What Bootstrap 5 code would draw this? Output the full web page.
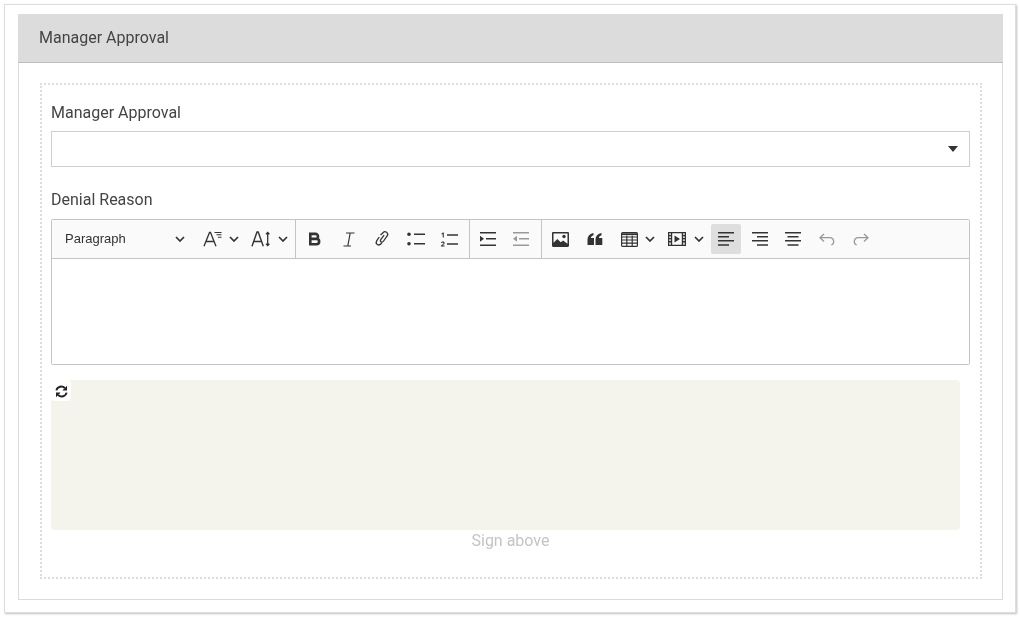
<!DOCTYPE html>
<html lang="en">
<head>
<meta charset="utf-8">
<title>Manager Approval</title>
<link href="https://cdn.jsdelivr.net/npm/bootstrap@5.3.0/dist/css/bootstrap.min.css" rel="stylesheet">
<style>
html,body{height:100%;background:#fff;overflow:hidden}
body{font-family:Roboto,"Liberation Sans",sans-serif;font-size:16px;color:#444;padding:4px 4px 4px 4px}
.sheet{height:609px;border:1px solid #ddd;box-shadow:1px 1px 2px rgba(0,0,0,.25);padding:9px 12px 13px 13px;will-change:transform}
.panel{height:586px;border:1px solid #dcdce0;border-top:0;border-radius:0;background:#fff}
.panel-head{height:49px;background:#dcdcdc;border-bottom:1px solid #bdbdbd;border-radius:0!important;margin:0 -1px;padding:0 21px;color:#444}
.dotbox{margin:20px 20px 0 21px;height:496px;border:2px dotted #ddd;padding:10px 10px 0 9px}
.fld-label{height:36px;padding-top:6px;line-height:24px;margin:0;color:#444;display:block}
.plain-select{height:36px;border:1px solid #ccd0d2;border-radius:0;background:#fff;display:block;width:100%;appearance:none}
.select-wrap{position:relative}
.select-wrap::after{content:"";position:absolute;right:12px;top:15px;border:5px solid transparent;border-top:6px solid #333;border-bottom:0}
.gap-label{margin-top:14px;height:38px;padding-top:7px;line-height:24px;color:#444}
.editor{height:146px;border:1px solid #c4c4c4;border-radius:2px}
.tb{height:39px;background:#fafafa;border-bottom:1px solid #c4c4c4}
.tb-group{height:38px}
.tb-group+.tb-group{border-left:1px solid #c4c4c4}
.tb-btn{height:30px;color:#333;flex:none}
.tb-btn svg{display:block;flex:none}
.w33{width:33.5px}
.para{width:142px;padding-left:13px;padding-right:9px;font-family:"Liberation Sans",sans-serif;font-size:13px;color:#333}
.font-a{width:49px;padding-right:4px;gap:6px}
.font-s{width:52px;padding-left:8px;gap:7px}
.w36{width:36px;padding-left:1px}
.numbered{width:36.5px;padding-left:7px}
.indent-on{width:33.5px;margin-left:1.25px}
.indent-off{width:33px;margin-right:3px}
.w38{width:38px}.w30{width:30px}
.tbl{width:53px;margin-left:2px;padding-left:9px;gap:7px}
.vid{width:46px;padding-left:3px;gap:8px}
.on{background:#dedede;border-radius:2px;width:30px;margin:0 3px 0 0}
.w33b{width:33px}.w34{width:34px}
.edit-area{height:105px;background:#fff}
.sig-wrap{margin-top:15px;position:relative}
.sig-pad{height:150px;width:909px;background:#f4f4ec;border-radius:4px}
.sig-reset{position:absolute;left:0;top:0;width:20px;height:21px;background:#fff;border-radius:4px;padding-top:1px}
.sig-note{text-align:center;color:#c4c4c4;line-height:22px}
</style>
</head>
<body>
<div class="sheet">
  <div class="card panel">
    <div class="card-header panel-head d-flex align-items-center">Manager Approval</div>
    <div class="dotbox">
      <label class="fld-label" for="mgr">Manager Approval</label>
      <div class="select-wrap"><select id="mgr" class="plain-select"></select></div>
      <div class="gap-label">Denial Reason</div>
      <div class="editor">
        <div class="tb d-flex align-items-center">
          <div class="tb-group d-flex align-items-center">
            <div class="tb-btn para d-flex align-items-center justify-content-between">Paragraph
              <svg width="10" height="6" viewBox="0 0 10 6" fill="none" stroke="#333" stroke-width="1.7"><path d="M1 1l4 4 4-4"/></svg>
            </div>
            <div class="tb-btn font-a d-flex align-items-center justify-content-end">
              <svg width="20" height="18" viewBox="0 0 20 18" fill="none" stroke="#333" stroke-width="1.3"><path d="M1 16.300L6.500 2.500h1L13 16.300M3 11.500h8.500"/><path d="M11.500 2.500h7M13.500 4.800h5M15 7.200h3.500" stroke-width="1.100"/></svg>
              <svg width="10" height="6" viewBox="0 0 10 6" fill="none" stroke="#333" stroke-width="1.7"><path d="M1 1l4 4 4-4"/></svg>
            </div>
            <div class="tb-btn font-s d-flex align-items-center">
              <svg width="20" height="18" viewBox="0 0 20 18" fill="none" stroke="#333" stroke-width="1.4"><path d="M1 16.300L6 2h1.200L12.300 16.300M2.800 11.500h8"/><path d="M16.700 2.500v13M15 4.300l1.700-1.800 1.700 1.800M15 13.700l1.700 1.800 1.700-1.800" stroke-width="1.300"/></svg>
              <svg width="10" height="6" viewBox="0 0 10 6" fill="none" stroke="#333" stroke-width="1.7"><path d="M1 1l4 4 4-4"/></svg>
            </div>
          </div>
          <div class="tb-group d-flex align-items-center">
            <div class="tb-btn w36 d-flex align-items-center justify-content-center">
              <svg width="14" height="14" viewBox="0 0 14 14" fill="none" stroke="#333" stroke-width="2.600"><path d="M2.300 .6v12.800M1 1.900h6.500a2.500 2.500 0 0 1 0 5H2.300M2.300 6.900h6.200a2.600 2.600 0 0 1 0 5.300H1"/></svg>
            </div>
            <div class="tb-btn w33 d-flex align-items-center justify-content-center">
              <svg width="12" height="15" viewBox="0 0 12 15" fill="none" stroke="#333" stroke-width="1.200"><path d="M3 1h8.500M.5 14H8M7.200 1L4.800 14"/></svg>
            </div>
            <div class="tb-btn w33 d-flex align-items-center justify-content-center">
              <svg width="16" height="16" viewBox="0 0 16 16" fill="none" stroke="#333" stroke-width="1.300"><path d="M6.500 4L9 1.800a2.600 2.600 0 0 1 4.300 2.900L9.600 10c-1 1.400-2.600 1.400-3.100.3-.3-.7 0-1.300.4-1.900l3.200-4.200"/><path d="M5.300 6L2.800 9.600c-1.700 2.600.7 5.500 3.400 3.800.7-.5 1.200-1 1.700-1.600"/></svg>
            </div>
            <div class="tb-btn w33 d-flex align-items-center justify-content-center">
              <svg width="18" height="14" viewBox="0 0 18 14" fill="#333"><circle cx="2" cy="2.300" r="1.800"/><circle cx="2" cy="11.700" r="1.800"/><path d="M7 1.600h11v1.400H7zM7 11h11v1.400H7z"/></svg>
            </div>
            <div class="tb-btn numbered d-flex align-items-center">
              <svg width="18" height="15" viewBox="0 0 18 15" fill="#333"><path d="M7 2.300h11v1.400H7zM7 11.300h11v1.400H7z"/><path d="M1.600 1.400L3 .6h.8v5H2.700V1.900l-1.100.5zM.9 14.600v-.9l2-1.800c.5-.5.6-.7.6-1s-.3-.5-.7-.5-.8.2-.8.7h-1c0-1 .8-1.600 1.800-1.600s1.800.6 1.800 1.400c0 .7-.4 1.100-1 1.700l-1.100 1h2.100v1z"/></svg>
            </div>
          </div>
          <div class="tb-group d-flex align-items-center">
            <div class="tb-btn indent-on d-flex align-items-center justify-content-center">
              <svg width="16" height="14" viewBox="0 0 16 14" fill="#333"><path d="M0 0h16v1.500H0zM0 12.500h16V14H0zM6 6h10v1.500H6zM0 3.800l4 3-4 3z"/></svg>
            </div>
            <div class="tb-btn indent-off d-flex align-items-center justify-content-center">
              <svg width="16" height="14" viewBox="0 0 16 14" fill="#999"><path d="M0 0h16v1.500H0zM0 12.500h16V14H0zM6 6h10v1.500H6zM4 3.800l-4 3 4 3z"/></svg>
            </div>
          </div>
          <div class="tb-group d-flex align-items-center">
            <div class="tb-btn w38 d-flex align-items-center justify-content-center">
              <svg width="17" height="15" viewBox="0 0 17 15"><path fill-rule="evenodd" fill="#333" d="M0 1.200C0 .5.500 0 1.200 0h14.600c.7 0 1.200.5 1.200 1.200v12.600c0 .7-.5 1.200-1.200 1.200H1.200C.5 15 0 14.500 0 13.800zM1.500 1.500v9.300l3.800-3.800 3.500 3.300 2.300-1.800 4.400 3.200V1.500z"/><circle cx="12" cy="4.500" r="1.700" fill="#333"/></svg>
            </div>
            <div class="tb-btn w30 d-flex align-items-center justify-content-center">
              <svg width="16" height="12" viewBox="0 0 15 12" fill="#333"><path d="M0 7a6.500 6.500 0 0 1 6-7v2.300C4.500 2.700 3.600 3.600 3.400 5H6.500v7H0zM8 7a6.500 6.500 0 0 1 6-7v2.300c-1.500.4-2.400 1.300-2.600 2.700H14.800v7H8z"/></svg>
            </div>
            <div class="tb-btn tbl d-flex align-items-center">
              <svg width="17" height="15" viewBox="0 0 17 15" fill="none" stroke="#333" stroke-width="1.200"><rect x=".6" y=".6" width="15.800" height="13.800" rx="1"/><path d="M.6 5h15.800M.6 8h15.800M.6 11.200h15.800M5.800 3.500v10.900M11.200 3.500v10.900"/><path d="M.6 2.200h15.800" stroke-width="1.800"/></svg>
              <svg width="10" height="6" viewBox="0 0 10 6" fill="none" stroke="#333" stroke-width="1.700"><path d="M1 1l4 4 4-4"/></svg>
            </div>
            <div class="tb-btn vid d-flex align-items-center">
              <svg width="18" height="14" viewBox="0 0 18 14"><path fill-rule="evenodd" fill="#333" d="M0 0h18v14H0zM1.300 1.300v1.600h1.500V1.300zM1.300 4.300v1.600h1.500V4.300zM1.300 7.300v1.600h1.500V7.300zM1.300 10.400V12.700h1.500v-2.300zM15.200 1.300v1.600h1.500V1.300zM15.200 4.300v1.600h1.500V4.300zM15.200 7.300v1.600h1.500V7.300zM15.200 10.400v2.300h1.500v-2.300zM4.200 1.300v11.400h9.600V1.300z"/><path fill="#333" d="M6.500 3.500l5.500 3.500-5.500 3.500z"/></svg>
              <svg width="10" height="6" viewBox="0 0 10 6" fill="none" stroke="#333" stroke-width="1.700"><path d="M1 1l4 4 4-4"/></svg>
            </div>
            <div class="tb-btn on d-flex align-items-center justify-content-center">
              <svg width="16" height="14" viewBox="0 0 16 14" fill="#333"><path d="M0 0h16v1.400H0zM0 4h11v1.400H0zM0 8h16v1.400H0zM0 12.300h11v1.400H0z"/></svg>
            </div>
            <div class="tb-btn w33b d-flex align-items-center justify-content-center">
              <svg width="16" height="14" viewBox="0 0 16 14" fill="#333"><path d="M0 0h16v1.400H0zM5 4h11v1.400H5zM0 8h16v1.400H0zM5 12.300h11v1.400H5z"/></svg>
            </div>
            <div class="tb-btn w33b d-flex align-items-center justify-content-center">
              <svg width="16" height="14" viewBox="0 0 16 14" fill="#333"><path d="M0 0h16v1.400H0zM2.500 4h11v1.400h-11zM0 8h16v1.400H0zM2.500 12.300h11v1.400h-11z"/></svg>
            </div>
            <div class="tb-btn w34 d-flex align-items-center justify-content-center">
              <svg width="16" height="13" viewBox="0 0 16 13" fill="none" stroke="#999" stroke-width="1.300"><path d="M5 1L1 4.700l4 3.700M1.500 4.700h9.500a3.700 3.700 0 0 1 3.700 3.700c0 1.800-1 3.100-2.400 3.600"/></svg>
            </div>
            <div class="tb-btn w34 d-flex align-items-center justify-content-center">
              <svg width="16" height="13" viewBox="0 0 16 13" fill="none" stroke="#999" stroke-width="1.300"><path d="M11 1l4 3.700-4 3.700M14.500 4.700H5a3.700 3.700 0 0 0-3.700 3.700c0 1.800 1 3.100 2.400 3.600"/></svg>
            </div>
          </div>
        </div>
        <div class="edit-area"></div>
      </div>
      <div class="sig-wrap">
        <div class="sig-pad"></div>
        <div class="sig-reset d-flex align-items-center justify-content-center">
          <svg width="13" height="13" viewBox="0 0 13 13" fill="none" stroke="#222" stroke-width="1.900"><path d="M1.400 5.400A5 5 0 0 1 9.800 3"/><path d="M11.600 7.600A5 5 0 0 1 3.200 10"/><path fill="#222" stroke="none" d="M12 .8v4.600H7.400zM1 12.200V7.600h4.600z"/></svg>
        </div>
        <div class="sig-note">Sign above</div>
      </div>
    </div>
  </div>
</div>
</body>
</html>
